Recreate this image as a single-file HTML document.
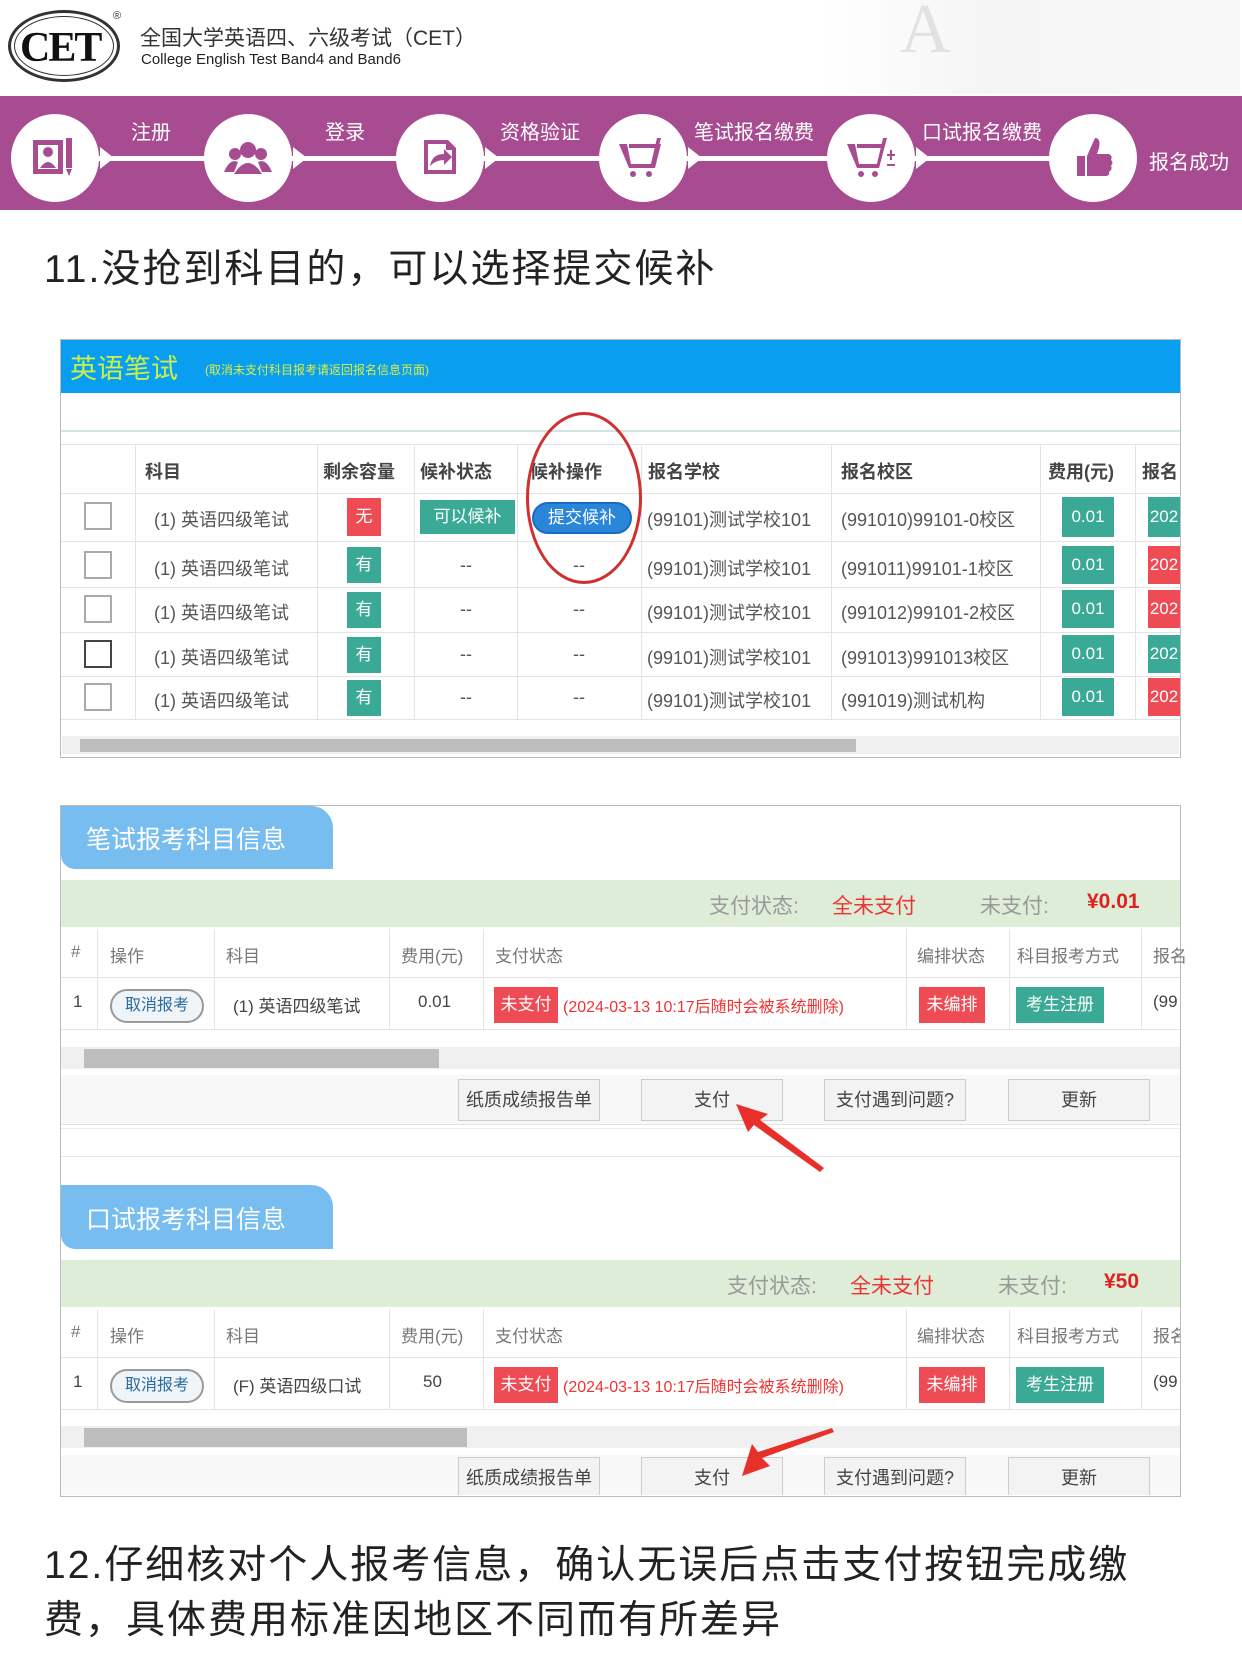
<!DOCTYPE html>
<html><head><meta charset="utf-8"><style>
*{margin:0;padding:0;box-sizing:border-box}
body{width:1242px;height:1656px;background:#fff;position:relative;overflow:hidden;font-family:"Liberation Sans","Noto Sans CJK SC",sans-serif;color:#555}
.a{position:absolute}
.band{left:0;top:96px;width:1242px;height:114px;background:#a84c92}
.circ{width:88px;height:88px;border-radius:50%;background:#fff;top:114px}
.lbl{color:#fff;font-size:20px;top:116px}
.line{top:156px;height:5px;background:#fff}
.tri{width:0;height:0;border-top:11px solid transparent;border-bottom:11px solid transparent;border-left:14px solid #fff;top:147px}
.big{font-size:39px;color:#222;left:44px;letter-spacing:2px}
.cell{position:absolute;font-size:18px;color:#555;white-space:nowrap}
.tag{position:absolute;color:#fff;font-size:17px;text-align:center;white-space:nowrap}
.g{background:#3aaa96}.r{background:#ee4b55}
.cb{position:absolute;width:28px;height:28px;border:2px solid #aaa;background:#fff}
.vl{position:absolute;width:1px;background:#e4e4e4}
.hl{position:absolute;height:1px;background:#e4e4e4}
.btn{position:absolute;height:42px;background:#f3f3f3;border:1px solid #ccc;font-size:18px;color:#444;text-align:center;line-height:40px;top:0}
.sec{position:absolute;left:61px;width:1119px;height:190px}
.sec .cell{font-size:17px;color:#777}
</style></head><body>
<div class="a" style="left:8px;top:10px;width:112px;height:72px;border:3px solid #333;border-radius:50%;"></div>
<div class="a" style="left:14px;top:16px;width:100px;height:60px;border:1px solid #333;border-radius:50%;"></div>
<div class="a" style="left:20px;top:24px;font-family:'Liberation Serif',serif;font-size:42px;color:#111;font-weight:bold;letter-spacing:-2px">CET</div>
<div class="a" style="left:113px;top:10px;font-size:11px;color:#333">®</div>
<div class="a" style="left:140px;top:22px;font-size:21px;color:#333">全国大学英语四、六级考试（CET）</div>
<div class="a" style="left:141px;top:51px;font-size:15px;color:#222">College English Test Band4 and Band6</div>
<div class="a" style="left:820px;top:0;width:420px;height:94px;background:linear-gradient(90deg,#fff,#f2f2f2 40%,#f7f7f7);opacity:.8"></div>
<div class="a" style="left:900px;top:-10px;font-family:'Liberation Serif',serif;font-size:70px;color:#e2e2e2">A</div>
<div class="a band"></div>
<div class="a line" style="left:90px;width:1010px"></div>
<div class="a circ" style="left:11px"></div>
<div class="a circ" style="left:204px"></div>
<div class="a circ" style="left:396px"></div>
<div class="a circ" style="left:599px"></div>
<div class="a circ" style="left:827px"></div>
<div class="a circ" style="left:1049px"></div>
<div class="a tri" style="left:100px"></div>
<div class="a tri" style="left:293px"></div>
<div class="a tri" style="left:485px"></div>
<div class="a tri" style="left:688px"></div>
<div class="a tri" style="left:916px"></div>
<div class="a lbl" style="left:131px">注册</div>
<div class="a lbl" style="left:325px">登录</div>
<div class="a lbl" style="left:500px">资格验证</div>
<div class="a lbl" style="left:694px">笔试报名缴费</div>
<div class="a lbl" style="left:922px">口试报名缴费</div>
<div class="a lbl" style="left:1149px;top:146px">报名成功</div>
<svg class="a" style="left:11px;top:114px" width="1232" height="88">
<g fill="#a84c92">
<rect x="22" y="26" width="30" height="34"/><rect x="27" y="31" width="20" height="24" fill="#fff"/><circle cx="37" cy="38" r="5"/><path d="M29 54q8-12 16 0z"/><rect x="55" y="24" width="6" height="30"/><path d="M55 55h6l-3 7z"/>
<g transform="translate(193,0)"><circle cx="44" cy="36" r="8"/><circle cx="31" cy="40" r="6"/><circle cx="57" cy="40" r="6"/><path d="M30 60q14-22 28 0z"/><path d="M20 58q6-14 14-10l-4 10z M68 58q-6-14-14-10l4 10z"/></g>
<g transform="translate(385,0)"><path d="M28 26h24l8 8v26h-32z"/><path d="M32 30h18v6h6v20h-24z" fill="#fff"/><path d="M34 52q2-12 14-12v-5l8 8-8 8v-5q-8 0-14 6z"/></g>
<g transform="translate(588,0)"><path d="M20 30h8l4 20h22l4-16h-28v-4h32l-6 24h-26z"/><circle cx="34" cy="60" r="3"/><circle cx="50" cy="60" r="3"/><path d="M58 24h4l-8 30h-3z"/></g>
<g transform="translate(816,0)"><path d="M20 30h8l4 20h18l4-16h-24v-4h28l-6 24h-22z"/><circle cx="34" cy="60" r="3"/><circle cx="48" cy="60" r="3"/><path d="M56 24h4l-8 30h-3z"/><path d="M60 40h3v-4h2v4h3v2h-3v4h-2v-4h-3z M60 50h8v2h-8z"/></g>
<g transform="translate(1038,0)"><path d="M28 42h8v20h-8z"/><path d="M38 42l8-18q6 0 4 10l-2 6h12q4 2 2 6 3 2 0 6 2 3-2 6 1 4-4 4h-18z"/></g>
</g></svg>
<div class="a big" style="top:238px">11.没抢到科目的，可以选择提交候补</div>
<div class="a" style="left:60px;top:339px;width:1121px;height:419px;border:1px solid #bbb;background:#fff"></div>
<div class="a" style="left:61px;top:340px;width:1119px;height:53px;background:#0a9ef0"></div>
<div class="a" style="left:70px;top:347px;font-size:27px;color:#c8f04a">英语笔试</div>
<div class="a" style="left:205px;top:361px;font-size:12px;color:#d8f040">(取消未支付科目报考请返回报名信息页面)</div>
<div class="a" style="left:61px;top:430px;width:1119px;height:2px;background:#cfe7e2"></div>
<div class="hl" style="left:61px;top:444px;width:1119px"></div>
<div class="hl" style="left:61px;top:493px;width:1119px"></div>
<div class="hl" style="left:61px;top:541px;width:1119px"></div>
<div class="hl" style="left:61px;top:587px;width:1119px"></div>
<div class="hl" style="left:61px;top:632px;width:1119px"></div>
<div class="hl" style="left:61px;top:676px;width:1119px"></div>
<div class="hl" style="left:61px;top:719px;width:1119px"></div>
<div class="vl" style="left:135px;top:444px;height:275px"></div>
<div class="vl" style="left:317px;top:444px;height:275px"></div>
<div class="vl" style="left:414px;top:444px;height:275px"></div>
<div class="vl" style="left:517px;top:444px;height:275px"></div>
<div class="vl" style="left:641px;top:444px;height:275px"></div>
<div class="vl" style="left:831px;top:444px;height:275px"></div>
<div class="vl" style="left:1040px;top:444px;height:275px"></div>
<div class="vl" style="left:1135px;top:444px;height:275px"></div>
<div class="cell" style="left:145px;top:458px;font-weight:bold;color:#444">科目</div>
<div class="cell" style="left:323px;top:458px;font-weight:bold;color:#444">剩余容量</div>
<div class="cell" style="left:420px;top:458px;font-weight:bold;color:#444">候补状态</div>
<div class="cell" style="left:530px;top:458px;font-weight:bold;color:#444">候补操作</div>
<div class="cell" style="left:648px;top:458px;font-weight:bold;color:#444">报名学校</div>
<div class="cell" style="left:841px;top:458px;font-weight:bold;color:#444">报名校区</div>
<div class="cell" style="left:1048px;top:458px;font-weight:bold;color:#444">费用(元)</div>
<div class="cell" style="left:1142px;top:458px;font-weight:bold;color:#444">报名</div>
<div class="cb" style="left:84px;top:502px"></div>
<div class="cb" style="left:84px;top:551px"></div>
<div class="cb" style="left:84px;top:595px"></div>
<div class="cb" style="left:84px;top:640px;border-color:#444"></div>
<div class="cb" style="left:84px;top:683px"></div>
<div class="cell" style="left:154px;top:506px">(1) 英语四级笔试</div>
<div class="cell" style="left:154px;top:555px">(1) 英语四级笔试</div>
<div class="cell" style="left:154px;top:599px">(1) 英语四级笔试</div>
<div class="cell" style="left:154px;top:644px">(1) 英语四级笔试</div>
<div class="cell" style="left:154px;top:687px">(1) 英语四级笔试</div>
<div class="tag r" style="left:347px;top:498px;width:34px;height:38px;line-height:38px">无</div>
<div class="tag g" style="left:347px;top:547px;width:34px;height:36px;line-height:36px">有</div>
<div class="tag g" style="left:347px;top:592px;width:34px;height:36px;line-height:36px">有</div>
<div class="tag g" style="left:347px;top:637px;width:34px;height:36px;line-height:36px">有</div>
<div class="tag g" style="left:347px;top:680px;width:34px;height:36px;line-height:36px">有</div>
<div class="tag g" style="left:420px;top:500px;width:95px;height:34px;line-height:34px">可以候补</div>
<div class="tag" style="left:532px;top:502px;width:100px;height:32px;line-height:28px;border-radius:16px;background:#2a86d8;border:2px solid #1a6cc0">提交候补</div>
<div class="cell" style="left:460px;top:555px">--</div><div class="cell" style="left:573px;top:555px">--</div>
<div class="cell" style="left:460px;top:599px">--</div><div class="cell" style="left:573px;top:599px">--</div>
<div class="cell" style="left:460px;top:644px">--</div><div class="cell" style="left:573px;top:644px">--</div>
<div class="cell" style="left:460px;top:687px">--</div><div class="cell" style="left:573px;top:687px">--</div>
<div class="cell" style="left:647px;top:506px">(99101)测试学校101</div>
<div class="cell" style="left:647px;top:555px">(99101)测试学校101</div>
<div class="cell" style="left:647px;top:599px">(99101)测试学校101</div>
<div class="cell" style="left:647px;top:644px">(99101)测试学校101</div>
<div class="cell" style="left:647px;top:687px">(99101)测试学校101</div>
<div class="cell" style="left:841px;top:506px">(991010)99101-0校区</div>
<div class="cell" style="left:841px;top:555px">(991011)99101-1校区</div>
<div class="cell" style="left:841px;top:599px">(991012)99101-2校区</div>
<div class="cell" style="left:841px;top:644px">(991013)991013校区</div>
<div class="cell" style="left:841px;top:687px">(991019)测试机构</div>
<div class="tag g" style="left:1062px;top:497px;width:52px;height:40px;line-height:40px">0.01</div>
<div class="tag g" style="left:1062px;top:546px;width:52px;height:38px;line-height:38px">0.01</div>
<div class="tag g" style="left:1062px;top:590px;width:52px;height:38px;line-height:38px">0.01</div>
<div class="tag g" style="left:1062px;top:635px;width:52px;height:38px;line-height:38px">0.01</div>
<div class="tag g" style="left:1062px;top:678px;width:52px;height:38px;line-height:38px">0.01</div>
<div class="tag g" style="left:1148px;top:497px;width:32px;height:40px;line-height:40px;overflow:hidden">202</div>
<div class="tag r" style="left:1148px;top:546px;width:32px;height:38px;line-height:38px;overflow:hidden">202</div>
<div class="tag r" style="left:1148px;top:590px;width:32px;height:38px;line-height:38px;overflow:hidden">202</div>
<div class="tag g" style="left:1148px;top:635px;width:32px;height:38px;line-height:38px;overflow:hidden">202</div>
<div class="tag r" style="left:1148px;top:678px;width:32px;height:38px;line-height:38px;overflow:hidden">202</div>
<div class="a" style="left:526px;top:412px;width:116px;height:172px;border:3px solid #d03030;border-radius:50%"></div>
<div class="a" style="left:62px;top:736px;width:1117px;height:18px;background:#f0f0f0"></div>
<div class="a" style="left:80px;top:739px;width:776px;height:13px;background:#bdbdbd"></div>
<div class="a" style="left:60px;top:805px;width:1121px;height:692px;border:1px solid #bbb;background:#fff"></div>
<div class="a" style="left:61px;top:806px;width:272px;height:63px;background:#78bdf0;border-radius:0 22px 0 14px"></div>
<div class="a" style="left:86px;top:820px;font-size:25px;color:#fff">笔试报考科目信息</div>
<div class="a" style="left:61px;top:880px;width:1119px;height:47px;background:#deedd7"></div>
<div class="a" style="left:709px;top:890px;font-size:21px;color:#999">支付状态:</div>
<div class="a" style="left:832px;top:890px;font-size:21px;color:#e33">全未支付</div>
<div class="a" style="left:980px;top:890px;font-size:21px;color:#999">未支付:</div>
<div class="a" style="left:1087px;top:890px;font-size:21px;color:#d22;font-weight:bold">¥0.01</div>
<div class="sec" style="top:929px">
 <div class="hl" style="left:0;top:48px;width:1119px"></div>
 <div class="hl" style="left:0;top:100px;width:1119px"></div>
 <div class="vl" style="left:36px;top:0;height:100px"></div>
 <div class="vl" style="left:153px;top:0;height:100px"></div>
 <div class="vl" style="left:328px;top:0;height:100px"></div>
 <div class="vl" style="left:422px;top:0;height:100px"></div>
 <div class="vl" style="left:845px;top:0;height:100px"></div>
 <div class="vl" style="left:948px;top:0;height:100px"></div>
 <div class="vl" style="left:1080px;top:0;height:100px"></div>
 <div class="cell" style="left:10px;top:13px">#</div>
 <div class="cell" style="left:49px;top:13px">操作</div>
 <div class="cell" style="left:165px;top:13px">科目</div>
 <div class="cell" style="left:340px;top:13px">费用(元)</div>
 <div class="cell" style="left:434px;top:13px">支付状态</div>
 <div class="cell" style="left:856px;top:13px">编排状态</div>
 <div class="cell" style="left:956px;top:13px">科目报考方式</div>
 <div class="cell" style="left:1092px;top:13px">报名</div>
 <div class="cell" style="left:12px;top:63px;color:#444">1</div>
 <div class="a" style="left:49px;top:60px;width:94px;height:34px;border:2px solid #999;border-radius:17px;background:#eef4f8;color:#2a6ca0;font-size:16px;text-align:center;line-height:30px">取消报考</div>
 <div class="cell" style="left:172px;top:63px;color:#444">(1) 英语四级笔试</div>
 <div class="cell" style="left:357px;top:63px;color:#444">0.01</div>
 <div class="tag r" style="left:433px;top:58px;width:64px;height:36px;line-height:36px">未支付</div>
 <div class="cell" style="left:502px;top:64px;color:#e33;font-size:16px">(2024-03-13 10:17后随时会被系统删除)</div>
 <div class="tag r" style="left:858px;top:58px;width:66px;height:36px;line-height:36px">未编排</div>
 <div class="tag g" style="left:955px;top:58px;width:88px;height:36px;line-height:36px">考生注册</div>
 <div class="cell" style="left:1092px;top:63px;color:#444">(99</div>
 <div class="a" style="left:0;top:118px;width:1119px;height:22px;background:#f0f0f0"></div>
 <div class="a" style="left:23px;top:120px;width:355px;height:19px;background:#bdbdbd"></div>
 <div class="a" style="left:0;top:146px;width:1119px;height:50px;background:#f8f8f8;border-bottom:1px solid #e4e4e4"></div>
 <div style="position:absolute;left:0;top:150px;width:1119px">
  <div class="btn" style="left:397px;width:142px">纸质成绩报告单</div>
  <div class="btn" style="left:580px;width:142px">支付</div>
  <div class="btn" style="left:763px;width:142px">支付遇到问题?</div>
  <div class="btn" style="left:947px;width:142px">更新</div>
 </div>
</div>
<div class="hl" style="left:61px;top:1128px;width:1119px;background:#e8eef4"></div>
<div class="hl" style="left:61px;top:1156px;width:1119px;background:#dfe9f2"></div>
<div class="a" style="left:61px;top:1185px;width:272px;height:64px;background:#78bdf0;border-radius:0 22px 0 14px"></div>
<div class="a" style="left:86px;top:1200px;font-size:25px;color:#fff">口试报考科目信息</div>
<div class="a" style="left:61px;top:1260px;width:1119px;height:47px;background:#deedd7"></div>
<div class="a" style="left:727px;top:1270px;font-size:21px;color:#999">支付状态:</div>
<div class="a" style="left:850px;top:1270px;font-size:21px;color:#e33">全未支付</div>
<div class="a" style="left:998px;top:1270px;font-size:21px;color:#999">未支付:</div>
<div class="a" style="left:1104px;top:1270px;font-size:21px;color:#d22;font-weight:bold">¥50</div>
<div class="sec" style="top:1309px;height:186px;overflow:hidden">
 <div class="hl" style="left:0;top:48px;width:1119px"></div>
 <div class="hl" style="left:0;top:100px;width:1119px"></div>
 <div class="vl" style="left:36px;top:0;height:100px"></div>
 <div class="vl" style="left:153px;top:0;height:100px"></div>
 <div class="vl" style="left:328px;top:0;height:100px"></div>
 <div class="vl" style="left:422px;top:0;height:100px"></div>
 <div class="vl" style="left:845px;top:0;height:100px"></div>
 <div class="vl" style="left:948px;top:0;height:100px"></div>
 <div class="vl" style="left:1080px;top:0;height:100px"></div>
 <div class="cell" style="left:10px;top:13px">#</div>
 <div class="cell" style="left:49px;top:13px">操作</div>
 <div class="cell" style="left:165px;top:13px">科目</div>
 <div class="cell" style="left:340px;top:13px">费用(元)</div>
 <div class="cell" style="left:434px;top:13px">支付状态</div>
 <div class="cell" style="left:856px;top:13px">编排状态</div>
 <div class="cell" style="left:956px;top:13px">科目报考方式</div>
 <div class="cell" style="left:1092px;top:13px">报名</div>
 <div class="cell" style="left:12px;top:63px;color:#444">1</div>
 <div class="a" style="left:49px;top:60px;width:94px;height:34px;border:2px solid #999;border-radius:17px;background:#eef4f8;color:#2a6ca0;font-size:16px;text-align:center;line-height:30px">取消报考</div>
 <div class="cell" style="left:172px;top:63px;color:#444">(F) 英语四级口试</div>
 <div class="cell" style="left:362px;top:63px;color:#444">50</div>
 <div class="tag r" style="left:433px;top:58px;width:64px;height:36px;line-height:36px">未支付</div>
 <div class="cell" style="left:502px;top:64px;color:#e33;font-size:16px">(2024-03-13 10:17后随时会被系统删除)</div>
 <div class="tag r" style="left:858px;top:58px;width:66px;height:36px;line-height:36px">未编排</div>
 <div class="tag g" style="left:955px;top:58px;width:88px;height:36px;line-height:36px">考生注册</div>
 <div class="cell" style="left:1092px;top:63px;color:#444">(99</div>
 <div class="a" style="left:0;top:117px;width:1119px;height:22px;background:#f0f0f0"></div>
 <div class="a" style="left:23px;top:119px;width:383px;height:19px;background:#bdbdbd"></div>
 <div class="a" style="left:0;top:146px;width:1119px;height:50px;background:#f8f8f8"></div>
 <div style="position:absolute;left:0;top:148px;width:1119px">
  <div class="btn" style="left:397px;width:142px">纸质成绩报告单</div>
  <div class="btn" style="left:580px;width:142px">支付</div>
  <div class="btn" style="left:763px;width:142px">支付遇到问题?</div>
  <div class="btn" style="left:947px;width:142px">更新</div>
 </div>
</div>
<svg class="a" style="left:0;top:0" width="1242" height="1656">
<path d="M736 1104 L768 1114 L760 1120 L824 1168 L820 1172 L754 1125 L748 1132 Z" fill="#e8302a"/>
<path d="M742 1476 L752 1444 L758 1452 L832 1428 L834 1432 L762 1458 L770 1466 Z" fill="#e8302a"/>
</svg>
<div class="a big" style="top:1534px">12.仔细核对个人报考信息，确认无误后点击支付按钮完成缴</div>
<div class="a big" style="top:1589px">费，具体费用标准因地区不同而有所差异</div>
</body></html>
